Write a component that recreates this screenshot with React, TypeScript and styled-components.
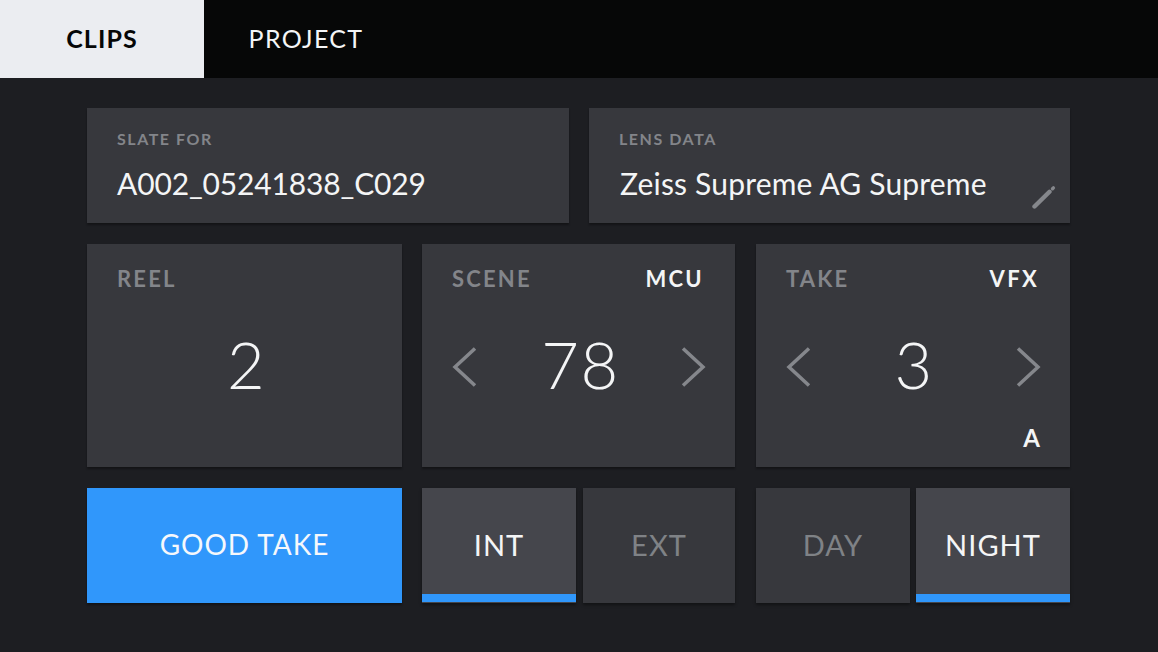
import React from "react";
import styled, { createGlobalStyle } from "styled-components";

const Global = createGlobalStyle`
  html, body { margin: 0; padding: 0; background: #1d1e22; }
  body { font-family: Lato, "Open Sans", "Liberation Sans", sans-serif; }
`;

const Page = styled.div`
  width: 1158px;
  height: 652px;
  overflow: hidden;
  background: #1d1e22;
  display: flex;
  flex-direction: column;
`;

const TabBar = styled.nav`
  height: 78px;
  flex: none;
  background: #060707;
  display: flex;
`;

const Tab = styled.div<{ $active?: boolean }>`
  width: 204px;
  height: 78px;
  box-sizing: border-box;
  display: flex;
  align-items: center;
  justify-content: center;
  padding-bottom: 3px;
  font-size: 25px;
  letter-spacing: ${(p) => (p.$active ? "1.1px" : "1.3px")};
  font-weight: ${(p) => (p.$active ? 700 : 400)};
  background: ${(p) => (p.$active ? "#ebedf1" : "transparent")};
  color: ${(p) => (p.$active ? "#060707" : "#f4f5f6")};
`;

const Content = styled.main`
  display: flex;
  flex-direction: column;
  gap: 21px;
  padding: 30px 0 0 87px;
  width: 983px;
`;

const TopRow = styled.div`
  display: grid;
  grid-template-columns: 482px 481px;
  column-gap: 20px;
  height: 115px;
`;

const MidRow = styled.div`
  display: grid;
  grid-template-columns: 315px 313px 315px;
  column-gap: 20px;
  height: 223px;
  & > :last-child {
    margin-left: 1px;
  }
`;

const BottomRow = styled.div`
  display: grid;
  grid-template-columns: 315px 174px 159px 175px 160px;
  height: 115px;
`;

const Card = styled.section`
  position: relative;
  background: #37383d;
  box-shadow: 0 2px 2px rgba(0, 0, 0, 0.35);
  box-sizing: border-box;
`;

const InfoCard = styled(Card)`
  padding: 22px 30px 0 31px;
`;

const SmallLabel = styled.div`
  margin-left: -1px;
  font-size: 16px;
  line-height: 18px;
  font-weight: 700;
  letter-spacing: 1.55px;
  color: #83858a;
`;

const InfoValue = styled.div<{ $spacing: number; $shift?: number }>`
  margin-top: 17px;
  margin-left: ${(p) => p.$shift ?? 0}px;
  font-size: 30px;
  line-height: 36px;
  letter-spacing: ${(p) => p.$spacing}px;
  color: #f4f5f6;
  white-space: nowrap;
`;

const PencilSlot = styled.div`
  position: absolute;
  right: 14px;
  bottom: 14px;
  width: 24px;
  height: 24px;
  line-height: 0;
`;

const CounterCard = styled(Card)`
  display: flex;
  flex-direction: column;
  padding: 22px 31px 0 30px;
`;

const CardHead = styled.div`
  display: flex;
  justify-content: space-between;
  align-items: center;
  height: 26px;
`;

const HeadLabel = styled.div`
  font-size: 22px;
  line-height: 26px;
  font-weight: 700;
  letter-spacing: 2.2px;
  color: #83858a;
`;

const HeadTag = styled.div`
  font-size: 22px;
  line-height: 26px;
  font-weight: 700;
  letter-spacing: 2.3px;
  color: #f4f5f6;
`;

const ValueRow = styled.div`
  display: flex;
  align-items: center;
  justify-content: space-between;
  margin-top: 41px;
  height: 64px;
`;

const BigValue = styled.div<{ $nudge: number }>`
  flex: 1;
  text-align: center;
  font-size: 65px;
  line-height: 64px;
  font-weight: 300;
  letter-spacing: 1.5px;
  color: #f4f5f6;
  padding-left: ${(p) => p.$nudge}px;
  margin-top: -2px;
`;

const Chevron = styled.svg<{ $right?: boolean }>`
  flex: none;
  width: 25px;
  height: 42px;
  margin-top: 4px;
  margin-right: ${(p) => (p.$right ? "-2px" : "0")};
  fill: none;
  stroke: #85878c;
  stroke-width: 3.5;
`;

const Suffix = styled.div`
  position: absolute;
  right: 30px;
  bottom: 16px;
  font-size: 24px;
  line-height: 26px;
  font-weight: 700;
  color: #f4f5f6;
`;

const GoodTake = styled.button`
  border: 0;
  padding: 0 0 3px;
  background: #3097fb;
  color: #f6f8fb;
  font-family: inherit;
  font-size: 28px;
  letter-spacing: 0.95px;
  box-shadow: 0 2px 2px rgba(0, 0, 0, 0.35);
`;

const Toggle = styled.button<{ $on?: boolean; $gap: number }>`
  border: 0;
  padding: 0 0 2px;
  box-sizing: border-box;
  margin-left: ${(p) => p.$gap}px;
  font-family: inherit;
  font-size: 29px;
  letter-spacing: 1.05px;
  background: ${(p) => (p.$on ? "#45464c" : "#37383d")};
  color: ${(p) => (p.$on ? "#f4f5f6" : "#7f8286")};
  box-shadow: ${(p) =>
      p.$on ? "inset 0 -1px 0 #45464c, inset 0 -9px 0 #3097fb, " : ""}0 2px 3px rgba(0, 0, 0, 0.4);
`;

const Left = () => (
  <Chevron viewBox="0 0 25 42">
    <path d="M23 2.5 L3 21 L23 39.5" />
  </Chevron>
);
const Right = () => (
  <Chevron $right viewBox="0 0 25 42">
    <path d="M2 2.5 L22 21 L2 39.5" />
  </Chevron>
);

export default function App() {
  return (
    <Page>
      <Global />
      <TabBar>
        <Tab $active>CLIPS</Tab>
        <Tab>PROJECT</Tab>
      </TabBar>
      <Content>
        <TopRow>
          <InfoCard>
            <SmallLabel>SLATE FOR</SmallLabel>
            <InfoValue $spacing={-0.15} $shift={-1}>A002_05241838_C029</InfoValue>
          </InfoCard>
          <InfoCard>
            <SmallLabel>LENS DATA</SmallLabel>
            <InfoValue $spacing={0.18}>Zeiss Supreme AG Supreme</InfoValue>
            <PencilSlot>
              <svg width="24" height="24" viewBox="0 0 24 24" fill="none" stroke="#85878c">
                <path d="M2.5 21.5 L17.5 6.8" strokeWidth="4.4" strokeLinecap="round" />
                <path d="M20.5 3.8 L21.4 2.9" strokeWidth="3.4" strokeLinecap="round" />
              </svg>
            </PencilSlot>
          </InfoCard>
        </TopRow>
        <MidRow>
          <CounterCard>
            <CardHead>
              <HeadLabel>REEL</HeadLabel>
            </CardHead>
            <ValueRow>
              <BigValue $nudge={5}>2</BigValue>
            </ValueRow>
          </CounterCard>
          <CounterCard>
            <CardHead>
              <HeadLabel>SCENE</HeadLabel>
              <HeadTag>MCU</HeadTag>
            </CardHead>
            <ValueRow>
              <Left />
              <BigValue $nudge={3}>78</BigValue>
              <Right />
            </ValueRow>
          </CounterCard>
          <CounterCard>
            <CardHead>
              <HeadLabel>TAKE</HeadLabel>
              <HeadTag>VFX</HeadTag>
            </CardHead>
            <ValueRow>
              <Left />
              <BigValue $nudge={1}>3</BigValue>
              <Right />
            </ValueRow>
            <Suffix>A</Suffix>
          </CounterCard>
        </MidRow>
        <BottomRow>
          <GoodTake>GOOD TAKE</GoodTake>
          <Toggle $on $gap={20}>INT</Toggle>
          <Toggle $gap={7}>EXT</Toggle>
          <Toggle $gap={21}>DAY</Toggle>
          <Toggle $on $gap={6}>NIGHT</Toggle>
        </BottomRow>
      </Content>
    </Page>
  );
}
